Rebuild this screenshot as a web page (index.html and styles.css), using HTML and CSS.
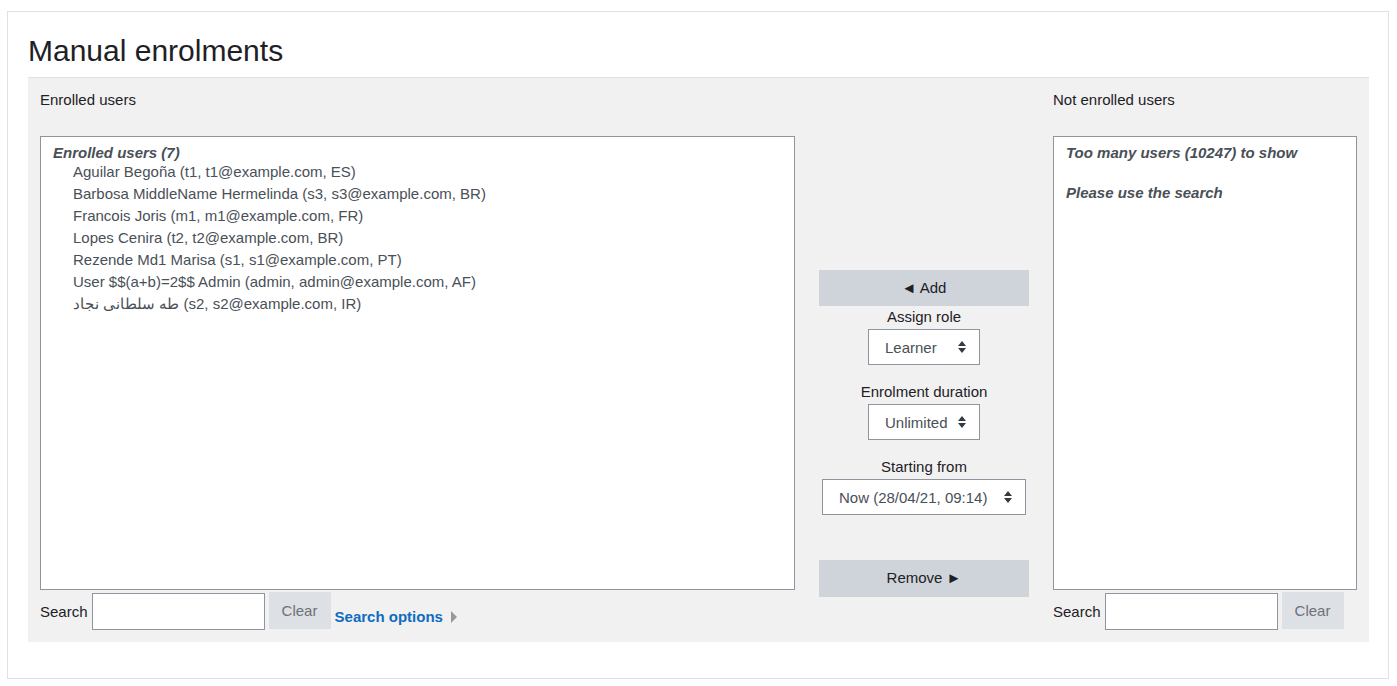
FILE: index.html
```html
<!DOCTYPE html>
<html lang="en">
<head>
    <meta charset="UTF-8">
    <title>Manual enrolments</title>
    <link rel="stylesheet" href="styles.css">
</head>
<body>
    <div class="card">
        <h2>Manual enrolments</h2>
        <div class="selector">
            <div class="col col-left">
                <div class="col-label">Enrolled users</div>
                <div class="userlist">
                    <div class="group">Enrolled users (7)</div>
                    <div class="opt">Aguilar Begoña (t1, t1@example.com, ES)</div>
                    <div class="opt">Barbosa MiddleName Hermelinda (s3, s3@example.com, BR)</div>
                    <div class="opt">Francois Joris (m1, m1@example.com, FR)</div>
                    <div class="opt">Lopes Cenira (t2, t2@example.com, BR)</div>
                    <div class="opt">Rezende Md1 Marisa (s1, s1@example.com, PT)</div>
                    <div class="opt">User $$(a+b)=2$$ Admin (admin, admin@example.com, AF)</div>
                    <div class="opt"><bdi>طه سلطانی نجاد</bdi> (s2, s2@example.com, IR)</div>
                </div>
                <div class="search-row">
                    <label for="removeselect_searchtext">Search</label>
                    <input type="text" id="removeselect_searchtext">
                    <button class="clear" disabled>Clear</button>
                    <a href="#" class="search-options">Search options</a>
                    <svg class="caret" width="7" height="12" viewBox="0 0 7 12"><path d="M0 0 L6 6 L0 12 Z" fill="#999"/></svg>
                </div>
            </div>

            <div class="col col-mid">
                <button class="move add">&#9668; Add</button>
                <div class="mid-label">Assign role</div>
                <div class="select-wrap small">
                    <select><option>Learner</option></select>
                    <svg class="arrows" width="8" height="12" viewBox="0 0 8 12"><path d="M4 0 L8 5 L0 5 Z M0 7 L8 7 L4 12 Z" fill="#343a40"/></svg>
                </div>
                <div class="mid-label gap">Enrolment duration</div>
                <div class="select-wrap small">
                    <select><option>Unlimited</option></select>
                    <svg class="arrows" width="8" height="12" viewBox="0 0 8 12"><path d="M4 0 L8 5 L0 5 Z M0 7 L8 7 L4 12 Z" fill="#343a40"/></svg>
                </div>
                <div class="mid-label gap">Starting from</div>
                <div class="select-wrap wide">
                    <select><option>Now (28/04/21, 09:14)</option></select>
                    <svg class="arrows" width="8" height="12" viewBox="0 0 8 12"><path d="M4 0 L8 5 L0 5 Z M0 7 L8 7 L4 12 Z" fill="#343a40"/></svg>
                </div>
                <button class="move remove">Remove &#9658;</button>
            </div>

            <div class="col col-right">
                <div class="col-label">Not enrolled users</div>
                <div class="userlist">
                    <div class="group">Too many users (10247) to show</div>
                    <div class="group second">Please use the search</div>
                </div>
                <div class="search-row">
                    <label for="addselect_searchtext">Search</label>
                    <input type="text" id="addselect_searchtext">
                    <button class="clear" disabled>Clear</button>
                </div>
            </div>
        </div>
    </div>
</body>
</html>
```

FILE: styles.css
```css
html, body {
    margin: 0;
    padding: 0;
    background: #fff;
}
body {
    font-family: "Liberation Sans", Arial, sans-serif;
    font-size: 15px;
    color: #1d2125;
}
.card {
    margin: 11px 8px 7px 7px;
    border: 1px solid #dee2e6;
    padding: 21px 19px 35px 20px;
    height: 610px;
    box-sizing: content-box;
}
.card h2 {
    margin: 0 0 8px;
    font-size: 30px;
    font-weight: 400;
    line-height: 36px;
}
.selector {
    display: flex;
    background: #f1f1f1;
    border-top: 1px solid #dee2e6;
    padding: 11px 12px 12px;
    height: 541px;
}
.col {
    display: flex;
    flex-direction: column;
}
.col-left {
    width: 755px;
}
.col-right {
    width: 304px;
}
.col-mid {
    width: 210px;
    margin: 0 24px;
    align-items: center;
}
.col-label {
    line-height: 22px;
    margin-bottom: 25px;
}
.userlist {
    height: 440px;
    background: #fff;
    border: 1px solid #8f959e;
    padding: 7px 12px 5px;
    color: #495057;
}
.group {
    font-weight: bold;
    font-style: italic;
    line-height: 17px;
}
.group.second {
    margin-top: 23px;
}
.opt {
    padding-left: 20px;
    line-height: 22px;
    white-space: nowrap;
}
.search-row {
    display: flex;
    align-items: center;
    margin-top: 3px;
    height: 37px;
}
.search-row label {
    margin-right: 4px;
}
.search-row input {
    width: 173px;
    height: 37px;
    box-sizing: border-box;
    border: 1px solid #8f959e;
    background: #fff;
    margin: 0;
    font: inherit;
}
.clear {
    width: 62px;
    height: 37px;
    margin-left: 4px;
    border: none;
    background: #dde0e4;
    color: #6a737b;
    font: inherit;
    padding: 0;
    position: relative;
    top: -1px;
}
.search-options {
    color: #0f6cbf;
    font-weight: bold;
    text-decoration: none;
    margin-left: 4px;
    margin-top: 10px;
}
.caret {
    margin-left: 8px;
    margin-top: 11px;
}
.move {
    width: 210px;
    height: 36px;
    border: none;
    background: #ced4da;
    color: #1d2125;
    font: inherit;
    padding: 0 0 2px;
}
.move.add {
    margin-top: 181px;
}
.move.remove {
    margin-top: 45px;
    height: 37px;
}
.mid-label {
    line-height: 22px;
    margin-bottom: 1px;
}
.mid-label.gap {
    margin-top: 16px;
}
.select-wrap {
    position: relative;
    height: 36px;
}
.select-wrap select {
    appearance: none;
    -webkit-appearance: none;
    height: 36px;
    box-sizing: border-box;
    border: 1px solid #8f959e;
    border-radius: 0;
    background: #fff;
    color: #495057;
    font: inherit;
    padding: 0 28px 0 16px;
    margin: 0;
}
.select-wrap.small select {
    width: 112px;
}
.select-wrap.wide select {
    width: 204px;
}
.arrows {
    position: absolute;
    right: 14px;
    top: 12px;
    pointer-events: none;
}
```
